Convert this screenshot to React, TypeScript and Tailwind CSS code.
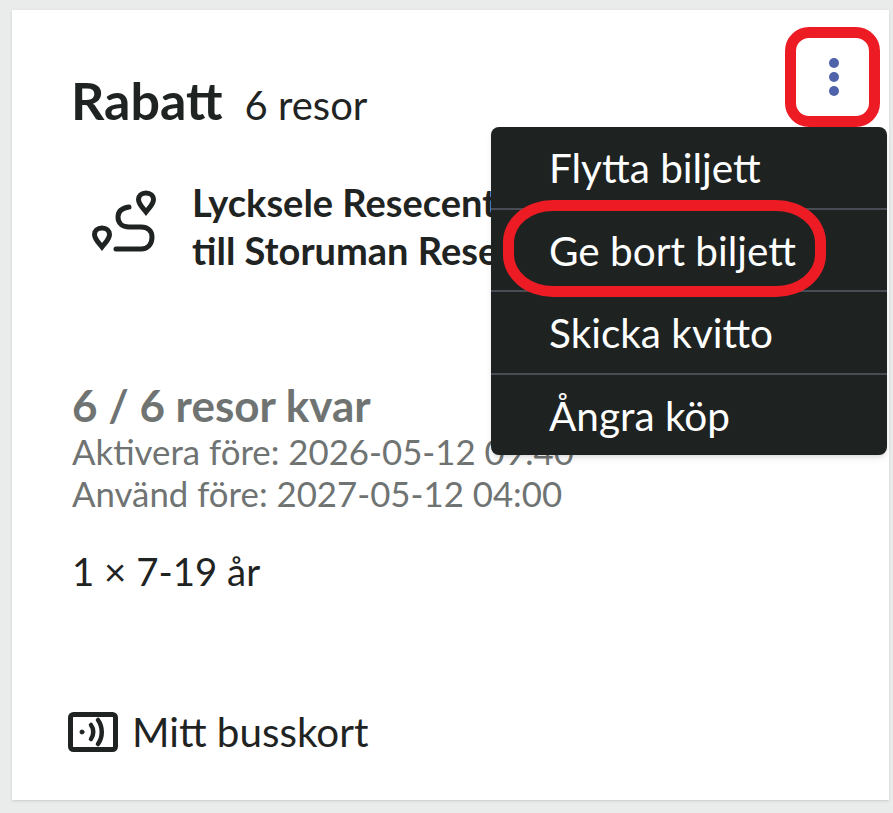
function RouteIcon() {
  return (
    <svg className="mb-[8px]" width="66" height="64" viewBox="0 0 66 64" fill="none" stroke="#1f2423" strokeWidth="5" strokeLinecap="round">
      <path d="M54 3c-4.500 0-7.500 3-7.500 6.500 0 4.500 4 8 7.500 12.500 3.500-4.500 7.500-8 7.500-12.500C61.500 6 58.500 3 54 3z" />
      <path d="M10 38c-4.500 0-7.500 3-7.500 6.500 0 4.500 4 8 7.500 12.500 3.500-4.500 7.500-8 7.500-12.500C17.500 41 14.500 38 10 38z" />
      <path d="M37 17c-7 1-11 4-11 10 0 6 4 10 11 10h12c7 0 11 4 11 10 0 7-4 12-11 12H24" />
    </svg>
  )
}

function CardIcon() {
  return (
    <svg width="50" height="40" viewBox="0 0 50 40" fill="none" stroke="#1f2423" strokeLinecap="round">
      <rect x="2.500" y="2.500" width="45" height="35" rx="3" strokeWidth="5" />
      <circle cx="14" cy="20" r="2" fill="#1f2423" strokeWidth="1" />
      <path d="M23 13c3 4 3 10 0 14" strokeWidth="4.500" />
      <path d="M30 8c5 7 5 17 0 24" strokeWidth="4.500" />
    </svg>
  )
}

const menuItems = ['Flytta biljett', 'Ge bort biljett', 'Skicka kvitto', 'Ångra köp']

export default function App() {
  return (
    <div className="h-[813px] w-[893px] overflow-hidden bg-[#e9ecea] pt-[10px] pl-[12px] font-['Lato',sans-serif] text-[#1f2423]">
      <div className="relative flex h-[790px] w-[877px] flex-col bg-white pt-[60px] pl-[60px] shadow-sm">
        <div className="-ml-[1px] flex items-baseline gap-[22px]">
          <h2 className="text-[52px] leading-[60px] font-bold">Rabatt</h2>
          <span className="text-[40px]">6 resor</span>
        </div>

        <div className="mt-[43px] flex items-center gap-[34px] pl-[20px]">
          <RouteIcon />
          <p className="text-[38px] leading-[48px] font-bold whitespace-nowrap">
            Lycksele Resecentrum
            <br />
            till Storuman Resecentrum
          </p>
        </div>

        <h3 className="mt-[105px] text-[44px] leading-[52px] font-bold text-[#6f7473]">6 / 6 resor kvar</h3>
        <div className="text-[34.8px] leading-[42px] text-[#6f7473]">
          <p>Aktivera före: 2026-05-12 09:40</p>
          <p>Använd före: 2027-05-12 04:00</p>
        </div>
        <p className="mt-[32px] text-[38.4px] leading-[48px]">1 × 7-19 år</p>

        <div className="mt-auto mb-[45px] -ml-[4px] flex items-center gap-[14px]">
          <CardIcon />
          <span className="text-[40.4px] leading-[46px]">Mitt busskort</span>
        </div>

        <button className="absolute top-[48px] right-[50px] flex flex-col gap-[4px]">
          <span className="h-[10px] w-[10px] rounded-full bg-[#4f63ab]" />
          <span className="h-[10px] w-[10px] rounded-full bg-[#4f63ab]" />
          <span className="h-[10px] w-[10px] rounded-full bg-[#4f63ab]" />
        </button>

        <ul className="absolute top-[117px] right-[2px] w-[396px] rounded-[8px] bg-[#1e2322] text-[40.5px] text-white shadow-md">
          {menuItems.map((item, i) => (
            <li
              key={item}
              className={`flex items-center pl-[58px] ${i < menuItems.length - 1 ? 'h-[82.7px] border-b-2 border-[#484d55] pt-[2px]' : 'h-[80px] pt-[3px]'}`}
            >
              {item}
            </li>
          ))}
        </ul>

        <div className="absolute top-[17px] right-[9px] h-[100px] w-[95px] rounded-[24px] border-[11px] border-[#ed1c24]" />
        <div className="absolute top-[190px] left-[491px] h-[97px] w-[323px] rounded-[50px/42px] border-[11px] border-[#ed1c24]" />
      </div>
    </div>
  )
}
